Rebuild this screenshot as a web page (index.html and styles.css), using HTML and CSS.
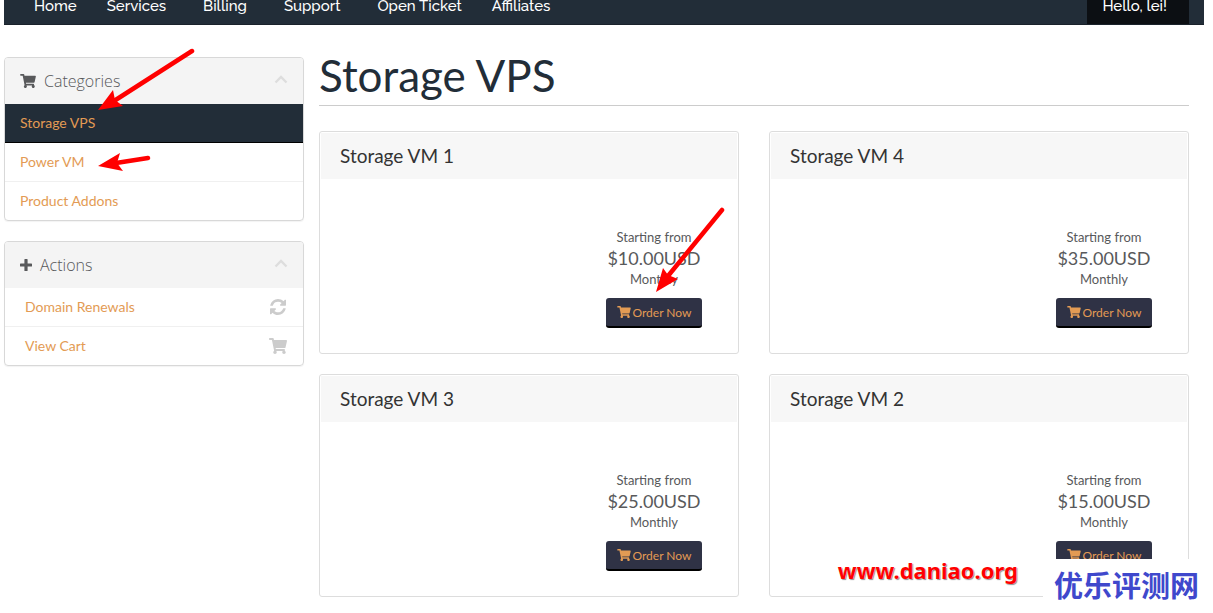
FILE: index.html
```html
<!DOCTYPE html>
<html lang="en">
<head>
    <meta charset="UTF-8">
    <meta name="viewport" content="width=device-width, initial-scale=1">
    <title>Storage VPS</title>
    <link rel="stylesheet" href="styles.css">
</head>
<body>
    <svg class="symbols" aria-hidden="true">
        <symbol id="cart" viewBox="0 0 576 512">
            <path d="M528.12 301.319l47.273-208C578.806 78.301 567.391 64 551.99 64H159.208l-9.166-44.81C147.758 8.021 137.93 0 126.529 0H24C10.745 0 0 10.745 0 24v16c0 13.255 10.745 24 24 24h69.883l70.248 343.435C147.325 417.1 136 435.222 136 456c0 30.928 25.072 56 56 56s56-25.072 56-56c0-15.674-6.447-29.835-16.824-40h209.647C430.447 426.165 424 440.326 424 456c0 30.928 25.072 56 56 56s56-25.072 56-56c0-22.172-12.888-41.332-31.579-50.405l5.517-24.276c3.413-15.018-8.002-29.319-23.403-29.319H218.117l-6.545-32h293.145c11.206 0 20.92-7.754 23.403-18.681z"/>
        </symbol>
        <symbol id="refresh" viewBox="0 0 1536 1536">
            <path d="M1511 928q0 5-1 7-64 268-268 434.5T764 1536q-146 0-282.5-55T238 1324l-129 129q-19 19-45 19t-45-19-19-45V960q0-26 19-45t45-19h448q26 0 45 19t19 45-19 45l-137 137q71 66 161 102t187 36q134 0 250-65t186-179q11-17 53-117 8-23 30-23h192q13 0 22.5 9.5t9.5 22.5zm25-800v448q0 26-19 45t-45 19h-448q-26 0-45-19t-19-45 19-45l138-138Q969 256 768 256q-134 0-250 65T332 500q-11 17-53 117-8 23-30 23H50q-13 0-22.5-9.5T18 608v-7q65-268 270-434.5T768 0q146 0 284 55.5T1297 212l130-129q19-19 45-19t45 19 19 45z"/>
        </symbol>
        <symbol id="plus" viewBox="0 0 12 12">
            <path d="M5 0h2q.6 0 .6.6v3.800h3.800q.6 0 .6.6v2q0 .6-.6.6H7.600v3.800q0 .6-.6.6H5q-.6 0-.6-.6V7.600H.6Q0 7.600 0 7V5q0-.6.6-.6h3.800V.6Q4.400 0 5 0z"/>
        </symbol>
        <symbol id="chevron" viewBox="0 0 14 9">
            <path d="M1.500 7.500L7 2l5.500 5.500" fill="none" stroke="currentColor" stroke-width="2.400"/>
        </symbol>
    </svg>

    <nav class="navbar">
        <a href="#">Home</a>
        <a href="#" class="dropdown">Services</a>
        <a href="#" class="dropdown">Billing</a>
        <a href="#" class="dropdown">Support</a>
        <a href="#">Open Ticket</a>
        <a href="#">Affiliates</a>
        <a href="#" class="dropdown account">Hello, lei!</a>
    </nav>

    <div class="content">
        <aside class="sidebar">
            <section class="panel">
                <h3 class="panel-heading">
                    <svg class="icon-cart"><use href="#cart"/></svg>
                    Categories
                    <svg class="chevron"><use href="#chevron"/></svg>
                </h3>
                <a href="#" class="item active">Storage VPS</a>
                <a href="#" class="item">Power VM</a>
                <a href="#" class="item">Product Addons</a>
            </section>
            <section class="panel actions">
                <h3 class="panel-heading">
                    <svg class="icon-plus"><use href="#plus"/></svg>
                    Actions
                    <svg class="chevron"><use href="#chevron"/></svg>
                </h3>
                <a href="#" class="item">Domain Renewals <svg class="icon-item"><use href="#refresh"/></svg></a>
                <a href="#" class="item">View Cart <svg class="icon-item"><use href="#cart"/></svg></a>
            </section>
        </aside>

        <main class="main">
            <h1>Storage VPS</h1>
            <div class="products">
                <article class="product">
                    <h2>Storage VM 1</h2>
                    <div class="pricing">
                        <span>Starting from</span>
                        <span class="price">$10.00USD</span>
                        <span>Monthly</span>
                        <button type="button"><svg><use href="#cart"/></svg>Order Now</button>
                    </div>
                </article>
                <article class="product">
                    <h2>Storage VM 4</h2>
                    <div class="pricing">
                        <span>Starting from</span>
                        <span class="price">$35.00USD</span>
                        <span>Monthly</span>
                        <button type="button"><svg><use href="#cart"/></svg>Order Now</button>
                    </div>
                </article>
                <article class="product">
                    <h2>Storage VM 3</h2>
                    <div class="pricing">
                        <span>Starting from</span>
                        <span class="price">$25.00USD</span>
                        <span>Monthly</span>
                        <button type="button"><svg><use href="#cart"/></svg>Order Now</button>
                    </div>
                </article>
                <article class="product">
                    <h2>Storage VM 2</h2>
                    <div class="pricing">
                        <span>Starting from</span>
                        <span class="price">$15.00USD</span>
                        <span>Monthly</span>
                        <button type="button"><svg><use href="#cart"/></svg>Order Now</button>
                    </div>
                </article>
            </div>
        </main>
    </div>

    <!-- annotations over the page -->
    <svg class="arrows" width="740" height="310" aria-hidden="true">
        <g stroke="#f00" stroke-width="4.500" stroke-linecap="round">
            <path d="M192 51L114 101M148 158L116 163M722 210L668 276"/>
        </g>
        <path fill="#f00" d="M98 110L113 90L115 100L123 106ZM98 166L120 153L117 163L123 171ZM656 292L663 268L668 275L678 279Z"/>
    </svg>
    <div class="site-url">www.daniao.org</div>
    <div class="site-name" lang="zh">优乐评测网</div>
</body>
</html>
```

FILE: styles.css
```css
* {
    box-sizing: border-box;
}
body {
    position: relative;
    margin: 0;
    padding: 0 9px 16px 4px;
    background: #fff;
    color: #58595b;
    font-family: Lato, sans-serif;
    font-size: 14px;
    line-height: 18px;
}
a {
    color: #e39b54;
    text-decoration: none;
}
svg {
    fill: currentColor;
}
.symbols {
    display: none;
}

/* navbar */
.navbar {
    display: flex;
    padding: 0 15px;
    background: #222d38;
    border-bottom: 1px solid #1a222b;
}
.navbar a {
    padding: 0 15px 12px;
    color: #fff;
    font-family: Raleway, Inter, sans-serif;
    font-size: 15px;
    font-weight: 500;
    line-height: 12px;
}
.navbar .dropdown {
    padding-right: 22px;
}
.navbar .account {
    margin-left: auto;
    background: #0c0f13;
}

.content {
    display: grid;
    grid-template-columns: 300px 1fr;
    gap: 15px;
    padding: 32px 15px 0 0;
}

/* sidebar */
.panel {
    margin-bottom: 20px;
    border: 1px solid #d8d8d8;
    border-radius: 4px;
    overflow: hidden;
    box-shadow: 0 1px 1px rgba(0, 0, 0, 0.05);
}
.panel-heading {
    display: flex;
    align-items: center;
    gap: 8px;
    height: 46px;
    margin: 0;
    padding: 0 15px;
    background: #f4f4f4;
    font-family: "Open Sans", sans-serif;
    font-size: 16px;
    font-weight: 300;
}
.icon-cart {
    width: 16px;
    height: 14px;
}
.icon-plus {
    width: 12px;
    height: 12px;
}
.chevron {
    width: 14px;
    height: 9px;
    margin-bottom: 4px;
    margin-left: auto;
    color: #ddd;
}
.item {
    display: flex;
    justify-content: space-between;
    align-items: center;
    height: 39px;
    padding: 0 16px 0 15px;
    border-bottom: 1px solid #f0f0f0;
}
.item:last-child {
    height: 38px;
    border-bottom: 0;
}
.item.active {
    background: #222d38;
    border-bottom-color: #000;
}
.actions .item {
    padding-left: 20px;
}
.icon-item {
    width: 18px;
    height: 16px;
    color: #ccc;
}

/* products */
h1 {
    height: 49px;
    margin: 0 0 25px;
    border-bottom: 1px solid #ccc;
    color: #222d38;
    font-size: 44px;
    font-weight: 400;
    line-height: 36px;
}
.products {
    display: grid;
    grid-template-columns: 1fr 1fr;
    gap: 20px 30px;
}
.product {
    padding: 1px;
    border: 1px solid #ddd;
    border-radius: 3px;
}
.product h2 {
    margin: 0;
    padding: 0 19px;
    background: #f7f7f7;
    color: #333;
    font-size: 19px;
    font-weight: 400;
    line-height: 46px;
}
.pricing {
    display: flex;
    flex-direction: column;
    align-items: center;
    width: 130px;
    margin: 48px 18px 24px auto;
    font-size: 13px;
    line-height: 21px;
}
.price {
    font-size: 18px;
}
.pricing button {
    display: flex;
    justify-content: center;
    align-items: center;
    gap: 2px;
    width: 96px;
    height: 30px;
    margin-top: 8px;
    padding: 0;
    background: #2f3245;
    color: #e39b54;
    border: 0;
    border-bottom: 2px solid #000;
    border-radius: 3px;
    font-family: inherit;
    font-size: 12px;
    cursor: pointer;
}
.pricing button svg {
    width: 14px;
    height: 12px;
}

/* annotations */
.arrows {
    position: absolute;
    top: 0;
    left: 0;
    pointer-events: none;
}
.site-url {
    position: absolute;
    top: 557px;
    right: 195px;
    color: #f00;
    font-family: "Noto Sans", sans-serif;
    font-size: 22px;
    font-weight: 700;
    line-height: 26px;
    text-shadow: 0 0 1px #fff, 1px 1px 1px #888;
}
.site-name {
    position: absolute;
    top: 559px;
    right: 0;
    width: 170px;
    height: 54px;
    padding-left: 11px;
    background: #fff;
    color: #3f48cc;
    font-family: "Noto Sans CJK SC", sans-serif;
    font-size: 29px;
    font-weight: 700;
    line-height: 50px;
}
```
